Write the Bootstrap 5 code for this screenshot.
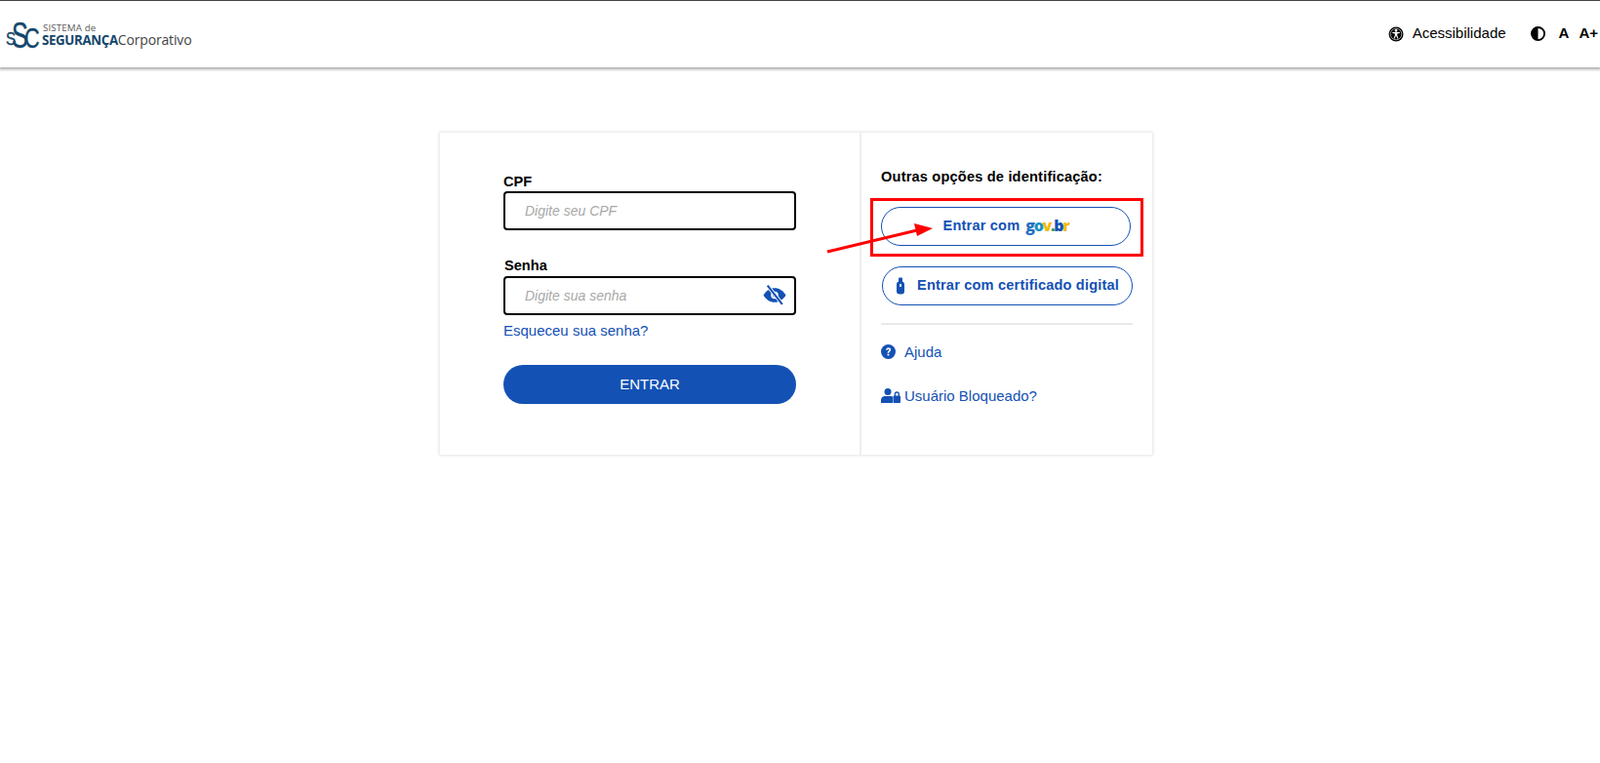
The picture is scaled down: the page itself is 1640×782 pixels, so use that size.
<!DOCTYPE html>
<html lang="pt-BR">
<head>
<meta charset="utf-8">
<title>Sistema de Segurança Corporativo</title>
<link rel="stylesheet" href="https://cdn.jsdelivr.net/npm/bootstrap@5.3.0/dist/css/bootstrap.min.css">
<style>
html,body{height:100%;}
body{font-family:"Liberation Sans",Arial,sans-serif;font-size:15px;color:#000;background:#fff;overflow:hidden;position:relative;}
a{text-decoration:none;}
.topbar{height:69px;border-top:1px solid #444;background:#fff;box-shadow:0 1px 3px 1px rgba(0,0,0,.35);padding:0 0 0 6px;}
.brand{line-height:1;width:195px;}
.brand-mark{flex:none;margin-top:2px;overflow:visible;}
.brand-mark text{font-family:"Liberation Sans",sans-serif;fill:#14466b;stroke:#14466b;stroke-width:.4px;}
.brand-lines{color:#5b5b5b;margin:2px 0 0 -1px;}
.brand-l1{font-family:"Open Sans",sans-serif;font-size:9.8px;line-height:10px;letter-spacing:.1px;padding-left:1px;}
.brand-l2{font-family:"Open Sans",sans-serif;font-size:14px;line-height:13px;color:#444;letter-spacing:-.15px;white-space:nowrap;}
.brand-l2 b{color:#14466b;font-weight:700;font-size:13.3px;letter-spacing:-.35px;}
.tools{font-size:15px;padding-right:2px;margin-top:-1px;}
.tools b{font-size:15px;}
.panel{width:730px;height:330px;margin:67px 0 0 451px;background:#fff;box-shadow:0 0 3px 1px rgba(0,0,0,.11);}
.pane-left{width:432px;padding:41px 0 0 65px;border-right:2px solid #eee;flex:none;}
.pane-right{padding:37px 0 0 20px;flex:1;}
.fld-label{font-weight:700;font-size:14.6px;line-height:18px;display:block;margin:0;}
.fld-box{width:300px;height:40px;border:2px solid #000;border-radius:4px;padding:0 12px 0 20px;font-style:italic;font-size:14px;box-shadow:none;}
.fld-box::placeholder{color:#a8a8a8;}
.fld-box:focus{border-color:#000;box-shadow:none;}
.eye{position:absolute;right:10px;top:8px;}
.blue-link{color:#1351b4;font-size:15px;}
.btn-main{width:300px;height:40px;border-radius:20px;background:#1351b4;color:#fff;font-size:15px;border:0;padding:0;}
.btn-main:hover{background:#1351b4;color:#fff;}
.btn-alt{height:40px;border-radius:20px;border:1px solid #1351b4;color:#1351b4;font-weight:700;font-size:14.6px;background:#fff;padding:0;white-space:nowrap;letter-spacing:.17px;}
.btn-alt:hover{background:#fff;color:#1351b4;}
.gov{font-weight:800;letter-spacing:-1.35px;font-size:16px;margin:-2px 0 0 6px;font-family:"Open Sans",sans-serif;line-height:1;}
.pane-title{font-weight:700;font-size:14.6px;line-height:17px;letter-spacing:.18px;margin:0;white-space:nowrap;}
.sep{height:2px;width:258px;background:#e9e9e9;opacity:1;border:0;margin:0;}
.annot-box{position:absolute;left:892px;top:203px;width:280px;height:60px;border:3px solid #f00;pointer-events:none;}
.annot-arrow{position:absolute;left:840px;top:225px;pointer-events:none;}
</style>
</head>
<body>
<header class="topbar d-flex align-items-center justify-content-between">
  <a class="brand d-flex align-items-center" href="#" aria-label="Sistema de Segurança Corporativo">
    <svg class="brand-mark" width="38" height="30" viewBox="0 0 38 30" aria-hidden="true">
      <text transform="translate(0 25) scale(.85 1)" font-size="18">S</text>
      <text transform="translate(6 28) scale(.68 1)" font-size="37">S</text>
      <text transform="translate(19 28) scale(.72 1)" font-size="30">C</text>
    </svg>
    <div class="brand-lines">
      <div class="brand-l1">SISTEMA de</div>
      <div class="brand-l2"><b>SEGURANÇA</b>Corporativo</div>
    </div>
  </a>
  <div class="tools d-flex align-items-center">
    <svg width="16" height="16" viewBox="0 0 16 16" style="margin-right:9px"><circle cx="8" cy="8" r="7.500" fill="#000"/><circle cx="8" cy="8" r="5.800" fill="none" stroke="#fff" stroke-width=".6"/><circle cx="8" cy="4.400" r="1.300" fill="#fff"/><path d="M4.200 6h7.600v.9L9.200 7.400V9l1.200 3.400-.9.3L8 9.600l-1.500 3.100-.9-.3L6.800 9V7.400L4.200 6.900z" fill="#fff"/></svg>
    <span style="margin-right:25px">Acessibilidade</span>
    <svg width="15" height="15" viewBox="0 0 16 16" style="margin-right:14px"><circle cx="8" cy="8" r="7" fill="#fff" stroke="#000" stroke-width="2"/><path d="M8 1a7 7 0 0 0 0 14z" fill="#000"/></svg>
    <b style="margin-right:10px">A</b>
    <b>A+</b>
  </div>
</header>

<main class="panel d-flex">
  <section class="pane-left">
    <label class="fld-label" for="cpf" style="margin-bottom:1px">CPF</label>
    <input id="cpf" class="form-control fld-box" placeholder="Digite seu CPF">
    <label class="fld-label" for="senha" style="margin:27px 0 2px;padding-left:1px">Senha</label>
    <div class="position-relative" style="width:300px">
      <input id="senha" class="form-control fld-box" placeholder="Digite sua senha">
      <svg class="eye" width="24" height="23" viewBox="0 0 23 21"><path d="M0.500 10.500C3 6 7 3.500 11.500 3.500S20 6 22.500 10.500C20 15 16 17.500 11.500 17.500S3 15 .5 10.500z" fill="#1351b4"/><circle cx="11.500" cy="10.500" r="3.600" fill="#fff"/><circle cx="11.500" cy="10.500" r="2" fill="#1351b4"/><path d="M4 0.500L19.500 20" stroke="#fff" stroke-width="3.600"/><path d="M4.500 1L19 19.500" stroke="#1351b4" stroke-width="2"/></svg>
    </div>
    <a class="blue-link d-block" href="#" style="margin-top:7px;line-height:17px">Esqueceu sua senha?</a>
    <button type="button" class="btn btn-main d-block" style="margin-top:27px">ENTRAR</button>
  </section>
  <section class="pane-right">
    <p class="pane-title">Outras opções de identificação:</p>
    <a href="#" class="btn btn-alt d-flex align-items-center justify-content-center" style="width:256px;margin-top:22px">Entrar com <span class="gov"><span style="color:#2670c4">g</span><span style="color:#1a8fc4">o</span><span style="color:#f2b90f">v</span><span style="color:#2ba24a">.</span><span style="color:#1351b4">b</span><span style="color:#f2b90f">r</span></span></a>
    <a href="#" class="btn btn-alt d-flex align-items-center justify-content-center" style="width:257px;margin-top:21px;margin-left:1px">
      <svg width="10" height="18" viewBox="0 0 10 18" style="margin-right:12px"><rect x="3" y="0.500" width="4" height="5" rx="1" fill="#1351b4"/><rect x="1" y="4.500" width="8" height="13" rx="3" fill="#1351b4"/><rect x="4.200" y="7" width="1.600" height="3" fill="#fff"/></svg>Entrar com certificado digital</a>
    <hr class="sep" style="margin-top:18px">
    <a class="blue-link d-flex align-items-center" href="#" style="margin-top:19px;line-height:17px">
      <svg width="15" height="15" viewBox="0 0 16 16" style="margin-right:9px"><circle cx="8" cy="8" r="8" fill="#1351b4"/><path d="M5.400 6.100C5.500 4.500 6.700 3.500 8.200 3.500c1.500 0 2.600 1 2.600 2.300 0 1.900-2 1.900-2 3.500H7.100c0-2.300 1.900-2.400 1.900-3.400 0-.5-.4-.9-.9-.9-.6 0-1 .4-1.100 1.100z" fill="#fff"/><rect x="7" y="10.300" width="1.900" height="1.900" fill="#fff"/></svg>Ajuda</a>
    <a class="blue-link d-flex align-items-center" href="#" style="margin-top:28px;line-height:17px">
      <svg width="20" height="15" viewBox="0 0 20 15" style="margin-right:4px"><circle cx="7" cy="3.600" r="3.500" fill="#1351b4"/><path d="M0 15v-3c0-2.500 2-4 4-4h6c.8 0 1.500.2 2 .5V15z" fill="#1351b4"/><rect x="12.500" y="7.500" width="7.500" height="7.500" rx="1" fill="#1351b4"/><path d="M14.300 8V6a2 2 0 0 1 4 0V8" fill="none" stroke="#1351b4" stroke-width="1.300"/></svg>Usuário Bloqueado?</a>
  </section>
</main>

<div class="annot-box"></div>
<svg class="annot-arrow" width="125" height="40" viewBox="0 0 125 40"><path d="M8 33L100 11" stroke="#f00" stroke-width="3"/><path d="M116 9L97 4L100 17z" fill="#f00"/></svg>
<script src="https://cdn.jsdelivr.net/npm/bootstrap@5.3.0/dist/js/bootstrap.bundle.min.js"></script>
</body>
</html>
